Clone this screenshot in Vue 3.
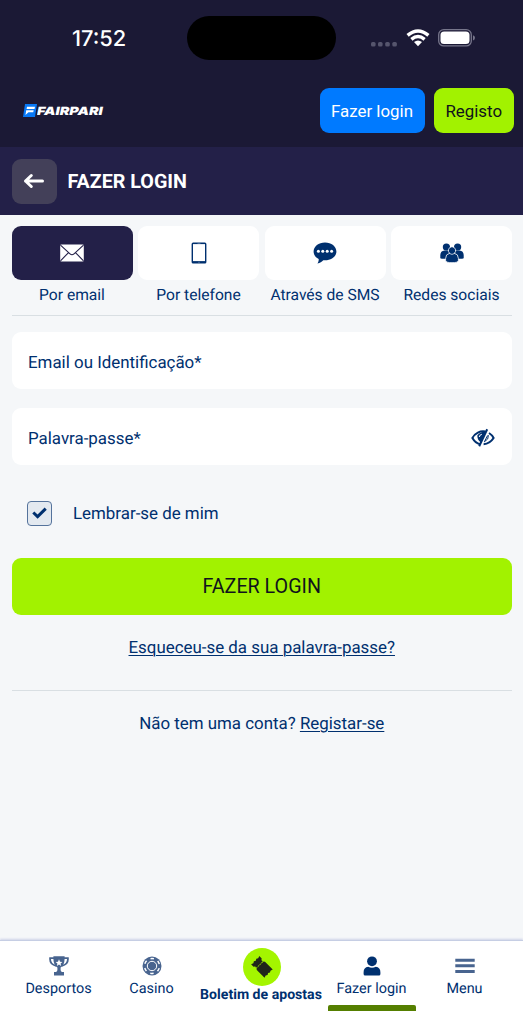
<script setup>
const methods = [
  { id: 'mail', label: 'Por email', active: true },
  { id: 'phone', label: 'Por telefone' },
  { id: 'sms', label: 'Através de SMS' },
  { id: 'social', label: 'Redes sociais' },
]
</script>

<template>
  <div class="screen">
    <div class="status">
      <span class="time">17:52</span>
      <div class="island"></div>
      <div class="indicators">
        <svg class="dots" width="28" height="5" viewBox="0 0 28 5" fill="#56556d">
          <rect x="1" width="4.6" height="4.6" rx="1.6" /><rect x="8" width="4.6" height="4.6" rx="1.6" />
          <rect x="15.2" width="4.6" height="4.6" rx="1.6" /><rect x="22.3" width="4.6" height="4.6" rx="1.6" />
        </svg>
        <svg class="wifi" width="24" height="18" viewBox="0 0 24 18" fill="none" stroke="#fff" stroke-width="3.4">
          <path d="M1.6 6.4Q12-2.6 22.4 6.4" /><path d="M5.4 10.4Q12 4.8 18.6 10.4" />
          <path d="M12 17.2L8 13.1Q12 9.7 16 13.1Z" fill="#fff" stroke="none" />
        </svg>
        <svg class="battery" width="38" height="18" viewBox="0 0 38 18">
          <rect x=".7" y=".7" width="32.6" height="16.2" rx="5" fill="none" stroke="#77768b" stroke-width="1.3" />
          <rect x="2.5" y="2.5" width="29" height="12.6" rx="3.6" fill="#fff" />
          <path d="M35 6.2Q37 6.8 37 8.8T35 11.4Z" fill="#77768b" />
        </svg>
      </div>
    </div>

    <header class="brandbar">
      <div class="logo">
        <svg width="14" height="13" viewBox="0 0 14 13">
          <path d="M2 0H14L12 13H0Z" fill="#0878f5" />
          <path d="M4 2.8H12L11.5 5.1H3.6ZM3.2 6.2H10.7L10.2 8.2H5.5L2.5 11Z" fill="#fff" />
        </svg>
        <svg class="wordmark" width="70" height="18" viewBox="0 0 70 18">
          <text x="0" y="13" textLength="65.8" lengthAdjust="spacingAndGlyphs">FAIRPARI</text>
        </svg>
      </div>
      <div class="actions">
        <button class="btn login"><span>Fazer login</span></button>
        <button class="btn register"><span>Registo</span></button>
      </div>
    </header>

    <div class="titlebar">
      <button class="back">
        <svg width="22" height="16" viewBox="0 0 22 16" fill="none" stroke="#fff" stroke-width="3" stroke-linecap="round" stroke-linejoin="round">
          <path d="M2.5 8H19.5M8.3 2.5L2.5 8L8.3 13.5" />
        </svg>
      </button>
      <h1>FAZER LOGIN</h1>
    </div>

    <main>
      <div class="methods">
        <div v-for="m in methods" :key="m.id" class="method">
          <div class="tile" :class="{ active: m.active }">
            <svg v-if="m.id === 'mail'" width="24" height="18" viewBox="0 0 24 18">
              <rect x=".2" y=".5" width="23.6" height="17" rx="1.2" fill="#fff" />
              <path d="M.5 1.2L10 9.8Q12 11.6 14 9.8L23.5 1.2M.5 16.8L8.3 8.8M23.5 16.8L15.7 8.8" fill="none" stroke="#232048" stroke-width="1.1" />
            </svg>
            <svg v-else-if="m.id === 'phone'" width="16" height="22" viewBox="0 0 16 22">
              <rect x=".6" y=".4" width="14.8" height="21.2" rx="1.5" fill="#00306f" />
              <rect x="2" y="2.1" width="12" height="17" fill="#fff" />
              <path d="M6.5 1.2H9.5M7.3 20.3H8.7" stroke="#7c98ba" stroke-width=".7" />
            </svg>
            <svg v-else-if="m.id === 'sms'" width="24" height="22" viewBox="0 0 24 22">
              <path d="M12 .6C5.6.6.6 4.5.6 9.6C.6 12.8 2.6 15.5 5.7 17C5.8 18.8 5.2 20.2 4.4 21.4C7 21 9 19.8 10.3 18.2C17.5 19 23.4 15 23.4 9.6C23.4 4.5 18.4.6 12 .6Z" fill="#00306f" />
              <g fill="#fff"><circle cx="5.4" cy="9.3" r="1.5" /><circle cx="9.8" cy="9.3" r="1.5" /><circle cx="14.2" cy="9.3" r="1.5" /><circle cx="18.6" cy="9.3" r="1.5" /></g>
            </svg>
            <svg v-else width="24" height="20" viewBox="0 0 24 20" fill="#00306f">
              <circle cx="6.4" cy="4" r="3.6" /><circle cx="17.6" cy="4" r="3.6" />
              <path d="M.3 15V12Q.5 8 4.5 7.6H8Q10 8 10 11V15.8H2Q.3 15.8 .3 15ZM23.7 15V12Q23.5 8 19.5 7.6H16Q14 8 14 11V15.8H22Q23.7 15.8 23.7 15Z" />
              <path d="M12 3.7A3.8 3.8 0 0 1 14.4 10.3Q18.4 11 18.4 15.5V17.4Q18.4 19.7 12 19.7T5.6 17.4V15.5Q5.6 11 9.6 10.3A3.8 3.8 0 0 1 12 3.7Z" stroke="#fff" stroke-width=".8" />
              <path d="M9.2 10.4Q12 12.4 14.8 10.4" fill="none" stroke="#fff" stroke-width=".7" />
            </svg>
          </div>
          <span class="method-label">{{ m.label }}</span>
        </div>
      </div>

      <div class="field first"><span>Email ou Identificação*</span></div>
      <div class="field second">
        <span>Palavra-passe*</span>
        <svg width="24" height="20" viewBox="0 0 24 20" fill="none" stroke="#00306f" stroke-width="2">
          <path d="M16.2 1.2L8.2 18.2" stroke-width="2" />
          <path d="M14.5 3.6A12 12 0 0 0 1.4 10Q4.4 15.2 9 16.2" />
          <path d="M18 5Q21.2 7 22.6 10Q18.9 15.8 12.6 16.2" />
          <path d="M15.2 3.4L10 14.5Q5.8 11.5 6.4 7.2Q9 3.6 15.2 3.4Z" fill="#00306f" stroke="none" />
          <path d="M17.4 7.2Q18 11.4 13.4 13.8L16.6 7.5" stroke-width="1" />
          <path d="M8.3 9Q8.6 6.8 10.8 6.2" stroke="#fff" stroke-width="1.1" />
        </svg>
      </div>

      <div class="remember">
        <div class="checkbox">
          <svg width="15" height="12" viewBox="0 0 15 12" fill="none" stroke="#00306f" stroke-width="3"><path d="M1.3 5.5L5.6 9.6L13.7 1.6" /></svg>
        </div>
        <span>Lembrar-se de mim</span>
      </div>

      <button class="submit"><span>FAZER LOGIN</span></button>
      <div class="forgot"><a>Esqueceu-se da sua palavra-passe?</a></div>
      <div class="signup"><span>Não tem uma conta? <a>Registar-se</a></span></div>
    </main>

    <nav>
      <div class="item muted">
        <svg width="20" height="20" viewBox="0 0 20 20" fill="#48648f">
          <path d="M4.4 .3H15.6V3Q15.4 9.4 11.6 11.6V14Q11.7 15.5 13 16H15V19.6H5V16H7Q8.3 15.5 8.4 14V11.6Q4.6 9.4 4.4 3Z" />
          <path d="M5 2.2H1.1Q.6 8.6 7.2 9.8M15 2.2H18.9Q19.4 8.6 12.8 9.8" fill="none" stroke="#48648f" stroke-width="1.8" />
          <path d="M10 3.3L11 5.7L13.4 5.9L11.6 7.5L12.1 10L10 8.6L7.9 10L8.4 7.5L6.6 5.9L9 5.7Z" fill="#fff" />
        </svg>
        <span>Desportos</span>
      </div>
      <div class="item muted">
        <svg width="20" height="20" viewBox="0 0 20 20" fill="none">
          <circle cx="10" cy="10" r="9.5" fill="#48648f" />
          <circle cx="10" cy="10" r="7.5" stroke="#fff" stroke-width="1.5" stroke-dasharray="3.4 4.454" stroke-dashoffset="-2.2" />
          <circle cx="10" cy="10" r="4.7" stroke="#fff" stroke-width="1" />
        </svg>
        <span>Casino</span>
      </div>
      <div class="item slip">
        <div class="disc">
          <svg width="24" height="24" viewBox="0 0 24 24" fill="#20251b">
            <g transform="rotate(-45 12 12)">
              <path d="M6.2 2.4L8.6 3.2L10.3 2.2L12 3.2L13.7 2.2L15.4 3.2L17.8 2.4V5.8Q15.4 7 17 8.4H7Q8.6 7 6.2 5.8Z" />
              <path d="M7 9.2H17L17.8 10.4V21.4L15.4 20.6L13.7 21.6L12 20.6L10.3 21.6L8.6 20.6L6.2 21.4V10.4Z" />
              <path d="M8.4 8.8H15.6" stroke="#20251b" stroke-width="1" stroke-dasharray="1.2 1.2" />
            </g>
          </svg>
        </div>
        <span>Boletim de apostas</span>
      </div>
      <div class="item current">
        <svg width="20" height="20" viewBox="0 0 20 20" fill="#00306f">
          <circle cx="10" cy="5.3" r="4.9" /><path d="M1.6 18V16.2Q1.6 11.4 6.2 10.8Q10 12.7 13.8 10.8Q18.4 11.4 18.4 16.2V18Q18.4 19.5 16.9 19.5H3.1Q1.6 19.5 1.6 18Z" />
        </svg>
        <span>Fazer login</span>
      </div>
      <div class="item muted">
        <svg width="20" height="20" viewBox="0 0 20 20" fill="#48648f"><path d="M.3 2.7H19.7V5.8H.3ZM.3 8.2H19.7V11.3H.3ZM.3 13.9H19.7V17H.3Z" /></svg>
        <span>Menu</span>
      </div>
    </nav>
  </div>
</template>

<style>
body { margin: 0; }
</style>

<style scoped>
* { box-sizing: border-box; }
.screen { width: 523px; height: 1024px; display: flex; flex-direction: column; overflow: hidden; background: #f5f7f9; color: #00306f; font-family: Roboto, sans-serif; font-size: 16.9px; text-rendering: geometricPrecision; }
button { border: 0; padding: 0; margin: 0; font: inherit; color: inherit; display: flex; align-items: center; justify-content: center; white-space: nowrap; }
svg { display: block; flex: none; }
span { white-space: nowrap; }
.status { height: 75px; flex: none; background: #1b1935; display: grid; grid-template-columns: 187px 149px 1fr; align-items: start; }
.time { margin: 26px 0 0 72px; font: 500 21.8px/26px Inter, sans-serif; color: #fff; }
.island { height: 44px; margin-top: 16px; border-radius: 22px; background: #000; }
.indicators { display: flex; padding: 29px 0 0 34px; }
.dots { margin-top: 13px; }
.wifi { margin-left: 7.5px; }
.battery { margin-left: 8.5px; }
.brandbar { height: 72px; flex: none; background: #1b1935; padding: 13px 9.5px 14px 23px; display: flex; justify-content: space-between; align-items: center; }
.logo { display: flex; align-items: center; }
.wordmark text { font: italic 900 11.2px Inter, sans-serif; fill: #fff; }
.actions { display: flex; gap: 9.5px; }
.btn { height: 45px; border-radius: 9px; }
.login { width: 105px; background: #007aff; color: #fff; }
.register { width: 79.5px; background: #a2f200; color: #10131c; }
.titlebar { height: 68px; flex: none; background: #232048; display: flex; align-items: center; gap: 10.5px; padding-left: 11.5px; }
.back { width: 45.5px; height: 45px; border-radius: 9px; background: #434059; }
h1 { margin: 1px 0 0; color: #fff; font-weight: 700; font-size: 19.7px; line-height: 24px; }
main { flex: 1; padding: 11px 11px 0 11.5px; }
.methods { display: grid; grid-template-columns: repeat(4, 1fr); gap: 5.5px; height: 90px; border-bottom: 1px solid #d9dfe3; }
.tile { height: 54px; display: flex; align-items: center; justify-content: center; background: #fff; border-radius: 9px; }
.tile.active { background: #232048; }
.method-label { display: block; text-align: center; font-size: 15.6px; line-height: 20px; margin-top: 5px; }
.field { height: 57px; border-radius: 9px; background: #fff; padding: 3px 17px 0 16.5px; display: flex; align-items: center; justify-content: space-between; }
.field > span, .remember > span { padding-top: 2px; }
.first { margin-top: 16px; }
.second { margin-top: 19px; }
.remember { display: flex; align-items: center; gap: 21px; margin-top: 35px; padding-left: 15.5px; height: 26px; }
.checkbox { width: 25px; height: 25px; border: 1px solid #55739c; border-radius: 4px; background: #e3e9f0; display: flex; align-items: center; justify-content: center; }
.submit { width: 100%; height: 57px; border-radius: 9px; margin-top: 32px; background: #a2f200; color: #10131c; font-size: 19.7px; }
.forgot { height: 76px; padding-top: 22px; line-height: 22px; text-align: center; border-bottom: 1px solid #d9dfe3; }
.signup { margin-top: 22px; line-height: 22px; text-align: center; }
a { text-decoration: underline; text-decoration-thickness: 1px; text-underline-offset: 2px; }
nav { height: 84px; flex: none; display: grid; grid-template-columns: 93px 93px 127px 93px 93px; padding: 0 12px; background: #fff; border-top: 1px solid #c6cee4; box-shadow: 0 -1px 2px #cdd2e8; }
.item { display: flex; flex-direction: column; align-items: center; font-size: 14.4px; padding-top: 15px; }
.item > span { line-height: 20px; margin-top: 3px; }
.slip { padding-top: 7px; font-weight: 700; font-size: 14.1px; }
.disc { width: 38px; height: 38px; border-radius: 50%; background: #a4f500; display: flex; align-items: center; justify-content: center; }
.item.slip > span { margin-top: -1px; margin-left: -1px; }
.current::after { content: ''; width: 88px; height: 6px; margin-top: 6px; background: #557f00; border-radius: 2px 2px 0 0; }
</style>
